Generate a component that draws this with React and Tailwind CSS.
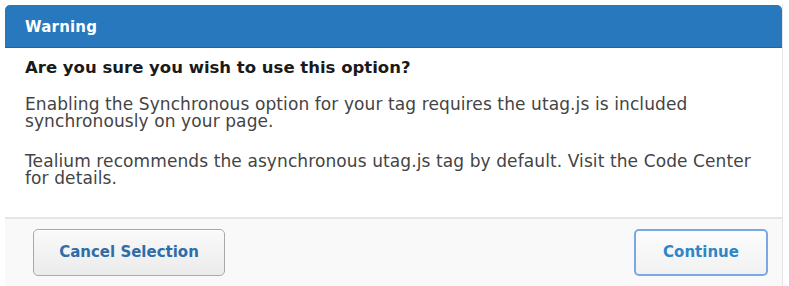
import React from "react";

export default function App() {
  const font = { fontFamily: '"DejaVu Sans", Verdana, sans-serif' };
  return (
    <div className="w-[789px] h-[286px] bg-white pt-[5px] pl-[5px] overflow-hidden" style={font}>
      <div className="w-[778px] h-[300px] flex flex-col border-r border-[#e4e4e4]">
        {/* Header */}
        <div className="h-[43px] bg-[#2878bd] rounded-t-[5px] flex items-center pl-[20px] pt-[3px] border-b border-[#1f64a3]">
          <span className="text-white font-bold text-[15px] tracking-[0.2px]">Warning</span>
        </div>

        {/* Body */}
        <div className="h-[169px] pl-[20px] pt-[10px] text-[#333]">
          <p className="font-bold text-[16.5px] text-[#1a1a1a] leading-[20px]">
            Are you sure you wish to use this option?
          </p>
          <p className="w-[745px] text-[17px] leading-[17px] tracking-[0.1px] mt-[18px] text-[#444]">
            Enabling the Synchronous option for your tag requires the utag.js is included synchronously on your page.
          </p>
          <p className="w-[745px] text-[17px] leading-[17px] tracking-[0.1px] mt-[23px] text-[#444]">
            Tealium recommends the asynchronous utag.js tag by default. Visit the Code Center for details.
          </p>
        </div>

        {/* Footer */}
        <div className="flex-1 bg-[#f9f9f9] border-t-2 border-[#e6e6e6] flex justify-between items-start pt-[10px] pl-[28px] pr-[14px]">
          <button className="w-[192px] h-[47px] rounded-[5px] border border-[#a9a9a9] bg-gradient-to-b from-[#fafafa] to-[#ebebeb] text-[#2e6da8] font-bold text-[15px] shadow-[inset_0_1px_0_#fff]">
            Cancel Selection
          </button>
          <button className="w-[134px] h-[47px] rounded-[5px] border-2 border-[#7aa8e6] bg-gradient-to-b from-[#fdfdfd] to-[#f1f1f1] text-[#2e86c9] font-bold text-[15px]">
            Continue
          </button>
        </div>
      </div>
    </div>
  );
}
